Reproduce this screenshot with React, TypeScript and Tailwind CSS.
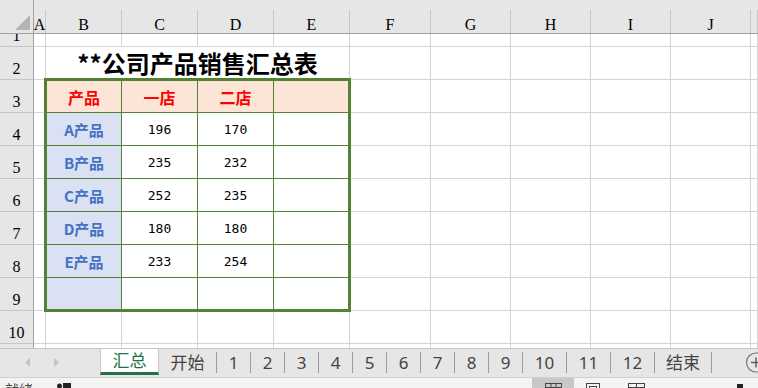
import React from "react";

const letters = ["A", "B", "C", "D", "E", "F", "G", "H", "I", "J", ""];

const tableRows: string[][] = [
  ["A产品", "196", "170", ""],
  ["B产品", "235", "232", ""],
  ["C产品", "252", "235", ""],
  ["D产品", "180", "180", ""],
  ["E产品", "233", "254", ""],
  ["", "", "", ""],
];

const tabs: { label: string; w: string }[] = [
  { label: "开始", w: "w-[58px]" },
  { label: "1", w: "w-[34px]" },
  { label: "2", w: "w-[34px]" },
  { label: "3", w: "w-[34px]" },
  { label: "4", w: "w-[34px]" },
  { label: "5", w: "w-[34px]" },
  { label: "6", w: "w-[34px]" },
  { label: "7", w: "w-[34px]" },
  { label: "8", w: "w-[34px]" },
  { label: "9", w: "w-[34px]" },
  { label: "10", w: "w-[44px]" },
  { label: "11", w: "w-[44px]" },
  { label: "12", w: "w-[44px]" },
  { label: "结束", w: "w-[57px]" },
];

function isCovered(r: number, c: number) {
  if (c < 1 || c > 4) return false;
  return r >= 2 && r <= 9;
}

export default function App() {
  const rows = [1, 2, 3, 4, 5, 6, 7, 8, 9, 10, 0];
  return (
    <div className="w-[758px] h-[388px] overflow-hidden bg-white flex flex-col font-['Noto_Sans','Noto_Sans_CJK_SC',sans-serif]">
      <div className="grid grid-cols-[34px_12px_76px_76px_76px_76px_81px_80px_80px_80px_80px_1fr] grid-rows-[34px_13px_repeat(9,33px)_4px] h-[348px] shrink-0">
        {/* merged title cell B2:E2 */}
        <div className="col-[3/7] row-[3] border-r border-b border-[#d4d4d4] flex items-center justify-center font-['Noto_Sans_CJK_SC',sans-serif] font-bold text-[24px] leading-none text-black">
          **公司产品销售汇总表
        </div>

        {/* data table B3:E9 */}
        <div className="col-[3/7] row-[4/11] -ml-[2px] -mt-[2px] -mr-px -mb-px relative z-10 border-[3px] border-[#548235] bg-white grid grid-cols-[75px_76px_76px_74px] grid-rows-[32px_repeat(5,33px)_31px]">
          {["产品", "一店", "二店", ""].map((h, i) => (
            <div
              key={"h" + i}
              className={
                "bg-[#fce4d6] border-b border-[#548235] flex items-center justify-center font-['Noto_Sans_CJK_SC',sans-serif] font-bold text-[16px] leading-none text-[#ff0000] " +
                (i < 3 ? "border-r" : "")
              }
            >
              {h}
            </div>
          ))}
          {tableRows.map((row, ri) =>
            row.map((v, ci) => {
              const last = ri === tableRows.length - 1;
              const base =
                "flex items-center justify-center border-[#548235] " +
                (ci < 3 ? "border-r " : "") +
                (!last ? "border-b " : "");
              if (ci === 0) {
                return (
                  <div
                    key={ri + "-" + ci}
                    className={
                      base +
                      "bg-[#d9e1f2] font-['Noto_Sans_CJK_SC',sans-serif] font-bold text-[15px] leading-none text-[#4472c4]"
                    }
                  >
                    {v}
                  </div>
                );
              }
              return (
                <div
                  key={ri + "-" + ci}
                  className={
                    base +
                    "bg-white font-['DejaVu_Sans_Mono',monospace] text-[13px] leading-none text-black"
                  }
                >
                  {v}
                </div>
              );
            })
          )}
        </div>

        {/* corner */}
        <div className="bg-[#e6e6e6] border-b border-r border-[#a0a0a0]">
          <svg width="33" height="33" viewBox="0 0 33 33">
            <polygon points="15,30 30,30 30,15" fill="#b4b4b4" />
          </svg>
        </div>
        {/* column headers */}
        {letters.map((l, i) => (
          <div key={"c" + i} className="bg-[#e6e6e6] pt-[10px] border-b border-[#a0a0a0]">
            <div className="h-full border-r border-[#c6c6c6] flex items-end justify-center font-['Liberation_Serif',serif] text-[16px] leading-none text-black">
              {l}
            </div>
          </div>
        ))}

        {/* rows */}
        {rows.map((r) => (
          <React.Fragment key={"r" + r}>
            <div
              className={
                "bg-[#e6e6e6] border-r border-r-[#a0a0a0] overflow-hidden flex items-end justify-center font-['Liberation_Serif',serif] text-[16px] leading-none text-black " +
                (r !== 0 ? "border-b border-b-[#c6c6c6] pb-[2px]" : "")
              }
            >
              {r !== 0 ? String(r) : ""}
            </div>
            {letters.map((_, c) =>
              isCovered(r, c) ? null : (
                <div
                  key={"cell" + r + "-" + c}
                  className={"bg-white border-r border-[#d4d4d4] " + (r !== 0 ? "border-b" : "")}
                />
              )
            )}
          </React.Fragment>
        ))}
      </div>

      {/* sheet tab bar */}
      <div className="h-[29px] shrink-0 border-t border-[#c6c6c6] bg-[#e6e6e6] flex items-start">
        <div className="w-[100px] h-[27px] flex items-center">
          <svg width="100" height="27" viewBox="0 0 100 27">
            <polygon points="30,9 30,18 25,13.5" fill="#c4c4c4" />
            <polygon points="54,9 54,18 59,13.5" fill="#c4c4c4" />
          </svg>
        </div>
        <div className="w-[59px] h-[26px] bg-white border-x border-[#c6c6c6] border-b-[3px] border-b-[#217346] flex items-center justify-center text-[17px] leading-none text-[#217346]">
          汇总
        </div>
        {tabs.map((t) => (
          <div key={t.label} className={t.w + " h-[26px] flex items-start shrink-0"}>
            <div className="flex-1 h-full flex items-center justify-center text-[17px] leading-none text-[#444444]">
              {t.label}
            </div>
            <div className="w-px h-[21px] mt-[3px] bg-[#9c9c9c]" />
          </div>
        ))}
        <div className="flex-1" />
        <div className="w-[13px] h-[27px] overflow-hidden">
          <svg width="24" height="27" viewBox="0 0 24 27">
            <circle cx="11" cy="13.5" r="9.5" fill="none" stroke="#7a7a7a" strokeWidth="1.2" />
            <line x1="6" y1="13.5" x2="16" y2="13.5" stroke="#5a5a5a" strokeWidth="1.4" />
            <line x1="11" y1="8.5" x2="11" y2="18.5" stroke="#5a5a5a" strokeWidth="1.4" />
          </svg>
        </div>
      </div>

      {/* status bar */}
      <div className="h-[12px] shrink-0 border-t border-[#d0d0d0] bg-[#f3f3f3] flex items-start overflow-hidden">
        <div className="ml-[5px] mt-[4px] text-[14px] leading-none text-[#444444] font-['Noto_Sans_CJK_SC',sans-serif]">
          就绪
        </div>
        <svg className="ml-[24px] mt-[5px]" width="14" height="8" viewBox="0 0 14 8">
          <circle cx="2.5" cy="3" r="2.5" fill="#222" />
          <rect x="6" y="0" width="8" height="8" fill="#222" />
        </svg>
        <div className="flex-1" />
        <div className="w-[42px] h-[11px] bg-[#c8c8c8] flex justify-center">
          <svg className="mt-[5px]" width="17" height="8" viewBox="0 0 17 8">
            <rect x="0.5" y="0.5" width="16" height="10" fill="none" stroke="#444" />
            <line x1="6" y1="0" x2="6" y2="8" stroke="#444" />
            <line x1="11" y1="0" x2="11" y2="8" stroke="#444" />
            <line x1="0" y1="4.5" x2="17" y2="4.5" stroke="#444" />
          </svg>
        </div>
        <svg className="ml-[12px] mt-[5px]" width="14" height="8" viewBox="0 0 14 8">
          <rect x="0.5" y="0.5" width="13" height="10" fill="none" stroke="#444" />
          <rect x="3.5" y="3.5" width="7" height="8" fill="none" stroke="#444" />
        </svg>
        <svg className="ml-[28px] mt-[5px]" width="17" height="8" viewBox="0 0 17 8">
          <rect x="0.5" y="0.5" width="16" height="10" fill="none" stroke="#444" />
          <line x1="8.5" y1="0" x2="8.5" y2="8" stroke="#444" />
          <line x1="0" y1="4.5" x2="17" y2="4.5" stroke="#444" />
        </svg>
        <div className="ml-[92px] mt-[6px] w-[6px] h-[6px] bg-[#222]" />
        <div className="w-[15px]" />
      </div>
    </div>
  );
}
